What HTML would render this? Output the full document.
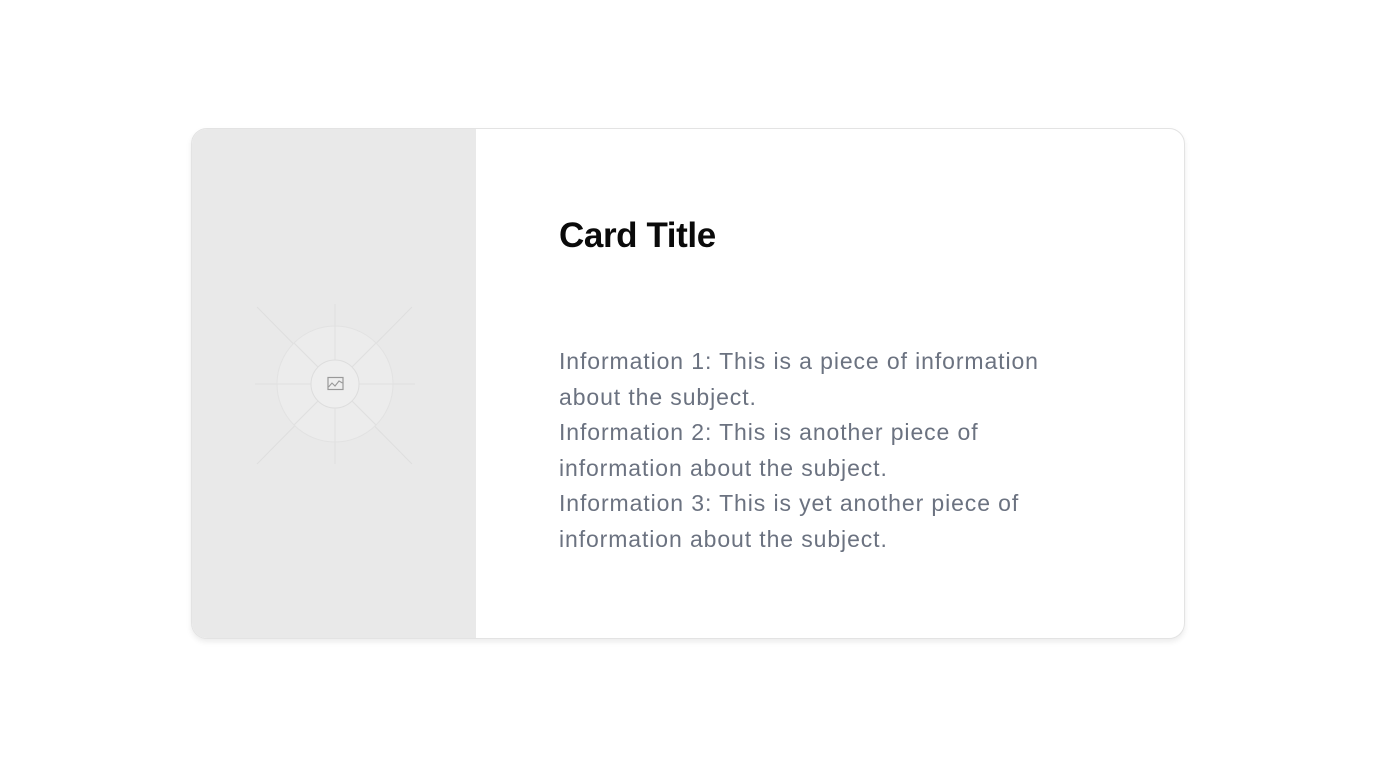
<!DOCTYPE html>
<html><head><style>
html,body{margin:0;padding:0;background:#fff;width:1376px;height:768px;overflow:hidden;font-family:"Liberation Sans",sans-serif}
.card{position:absolute;left:191px;top:128px;width:992px;height:509px;border:1px solid #e3e3e3;border-radius:16px;overflow:hidden;background:#fff;box-shadow:0 3px 6px rgba(0,0,0,0.08)}
.img{position:absolute;left:0;top:0;width:284px;height:100%;background:#e9e9e9}
h1{position:absolute;left:367px;top:87px;margin:0;font-size:35px;font-weight:bold;color:#0a0a0a;letter-spacing:-0.4px}
.txt{position:absolute;left:367px;top:215px;font-size:23px;line-height:35.5px;color:#6b7280;white-space:nowrap;letter-spacing:0.9px}
</style></head><body>
<div class="card">
<div class="img">
<svg width="284" height="509" style="position:absolute;left:0;top:0">
<g stroke="#dedede" stroke-width="1">
<line x1="143" y1="175" x2="143" y2="335"/>
<line x1="63" y1="255" x2="223" y2="255"/>
<line x1="65" y1="178" x2="220" y2="335"/>
<line x1="220" y1="178" x2="65" y2="335"/>
</g>
<circle cx="143" cy="255" r="58" fill="#ececec" stroke="#e2e2e2"/>
<g stroke="#e0e0e0"><line x1="143" y1="197" x2="143" y2="313"/><line x1="85" y1="255" x2="201" y2="255"/>
<line x1="102" y1="214" x2="184" y2="296"/><line x1="184" y1="214" x2="102" y2="296"/></g>
<circle cx="143" cy="255" r="24" fill="#eeeeee" stroke="#dddddd"/>
<rect x="136" y="248.5" width="15" height="12" fill="none" stroke="#999" stroke-width="1.2"/>
<path d="M136.5 258 L140 254 L143 257 L147 252 L150.5 254" fill="none" stroke="#999" stroke-width="1.1"/>
</svg>
</div>
<h1>Card Title</h1>
<div class="txt">Information 1: This is a piece of information<br>about the subject.<br>Information 2: This is another piece of<br>information about the subject.<br>Information 3: This is yet another piece of<br>information about the subject.</div>
</div>
</body></html>
